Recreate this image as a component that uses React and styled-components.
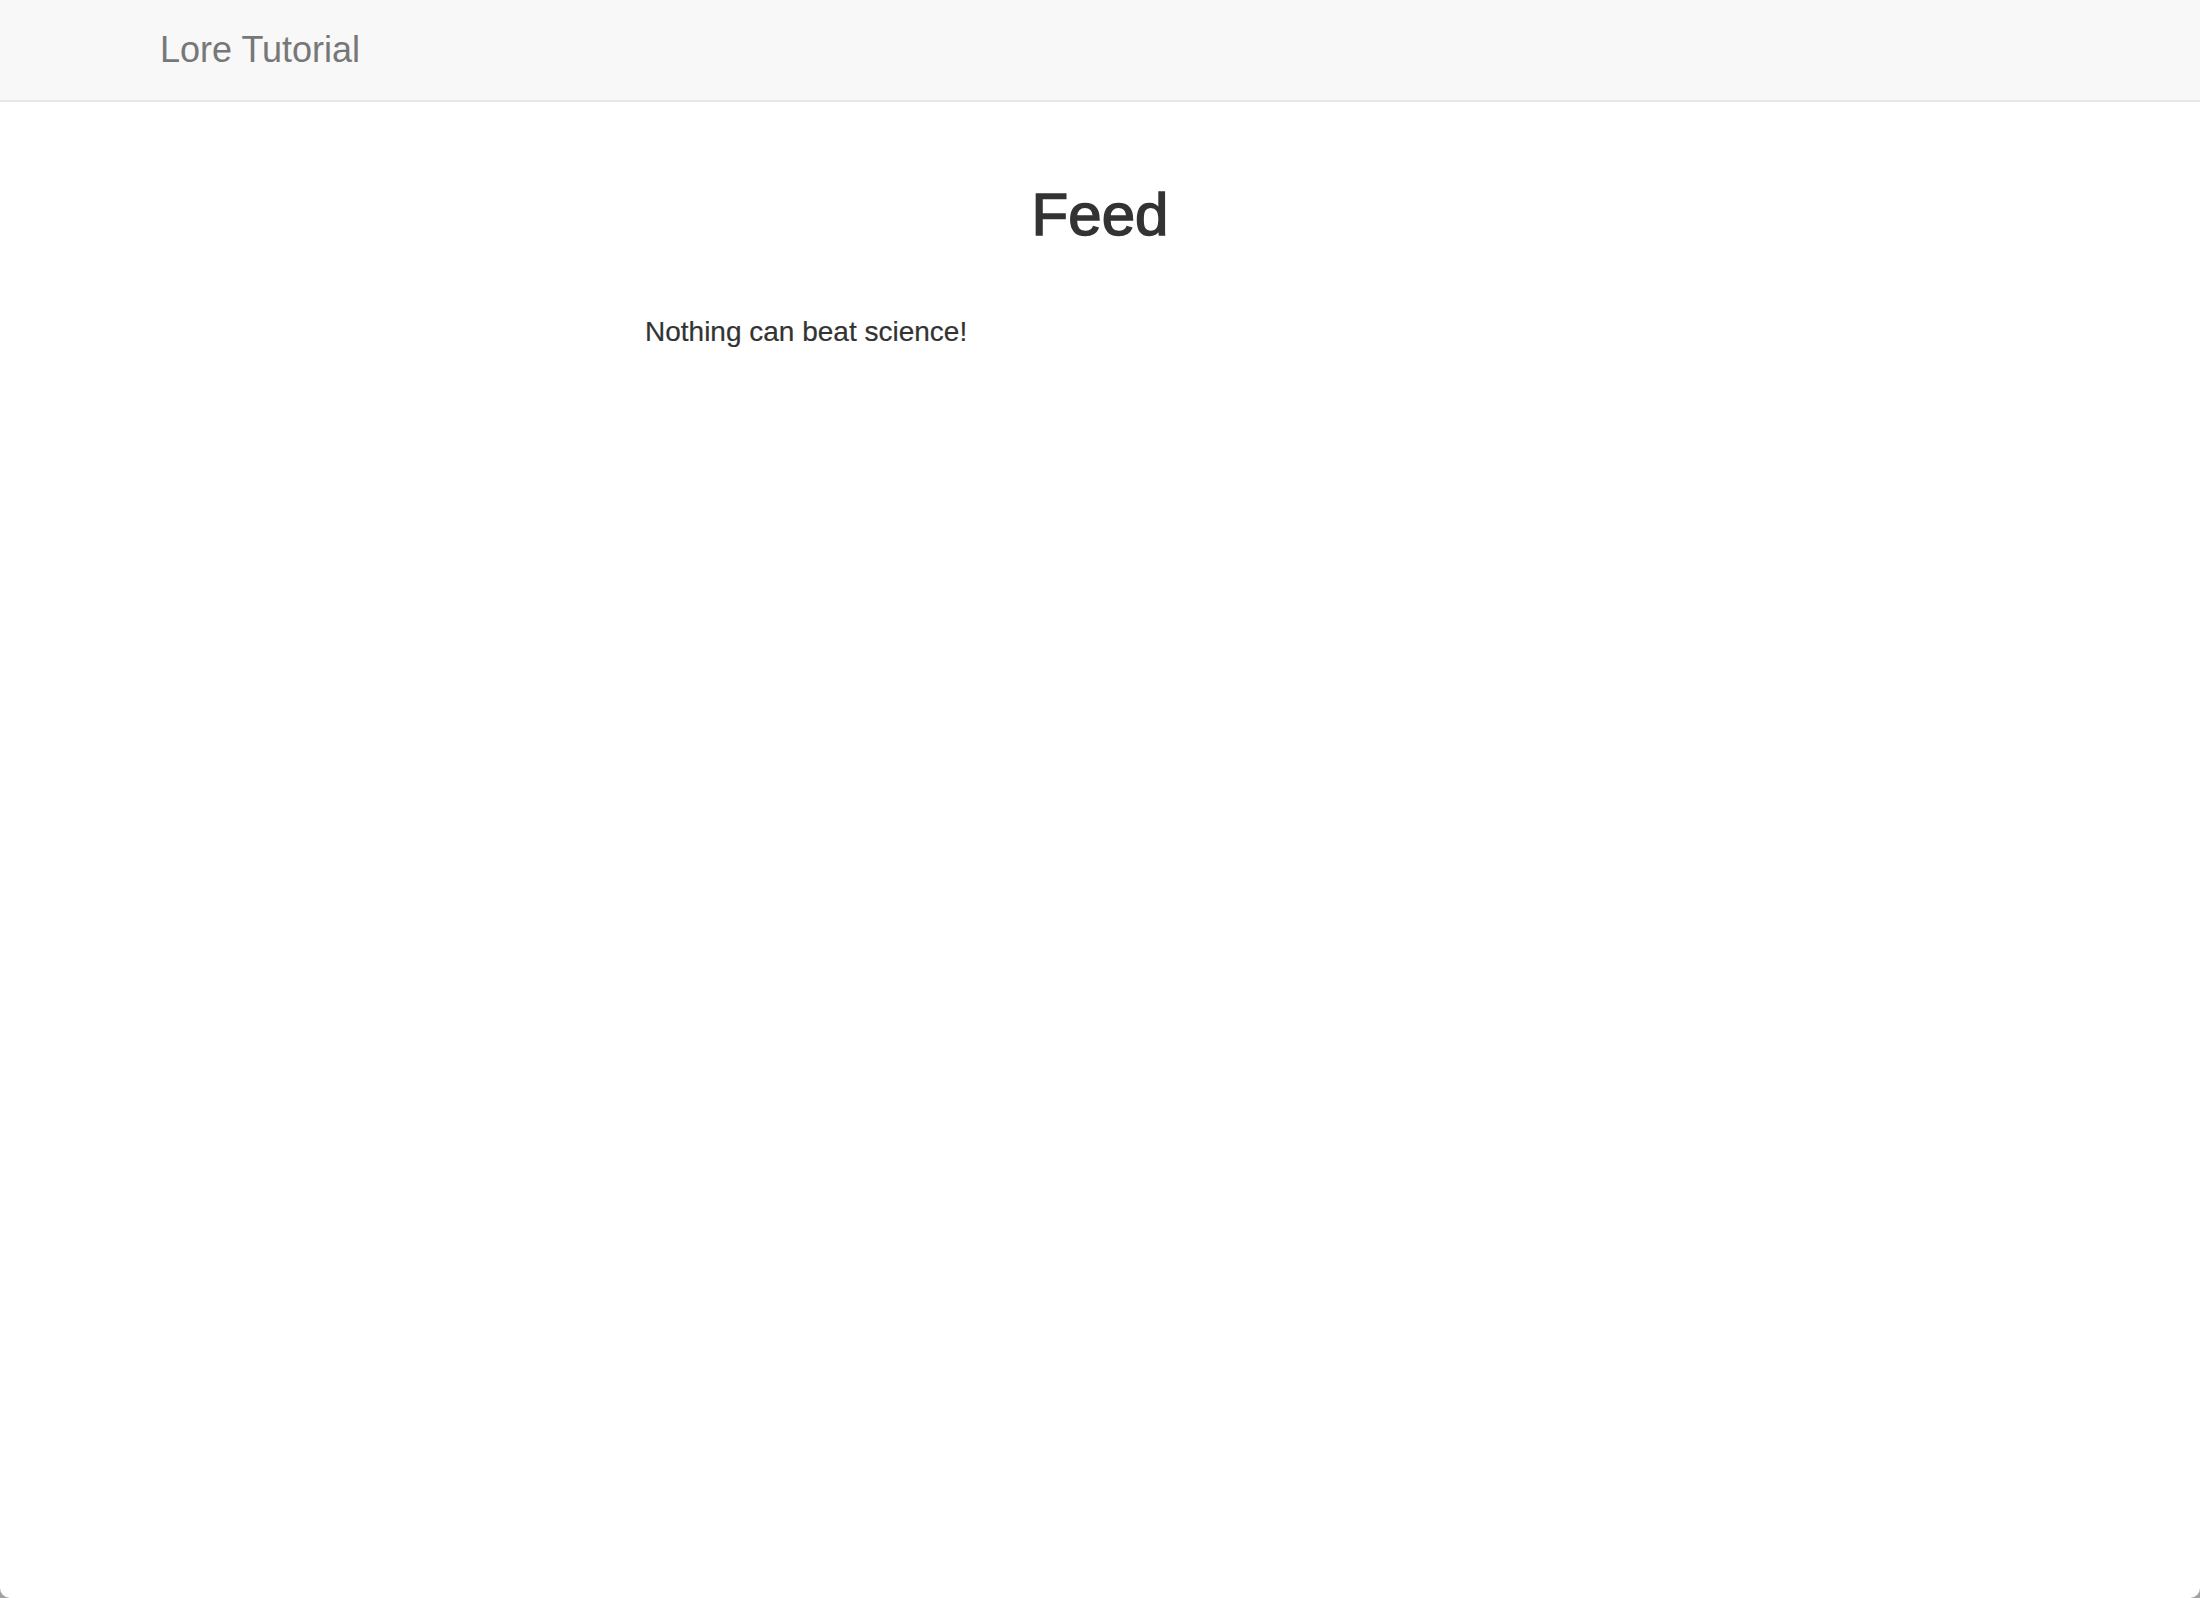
import React from "react";
import styled, { createGlobalStyle } from "styled-components";

const Global = createGlobalStyle`
  html, body { margin: 0; padding: 0; }
  body {
    background: #a0a0a0;
    font-family: "Liberation Sans", Arial, Helvetica, sans-serif;
    color: #333;
  }
`;

const Page = styled.div`
  height: 1598px;
  background: #fff;
  border-radius: 0 0 10px 10px;
  overflow: hidden;
`;

const Navbar = styled.nav`
  height: 100px;
  background: #f8f8f8;
  border-bottom: 2px solid #e7e7e7;
`;

const Container = styled.div`
  width: 1940px;
  margin: 0 auto;
  padding: 0 30px;
  box-sizing: border-box;
`;

const Brand = styled.a`
  display: block;
  width: fit-content;
  height: 100px;
  padding: 30px 30px;
  margin-left: -30px;
  box-sizing: border-box;
  font-size: 36px;
  line-height: 40px;
  color: #777;
  text-decoration: none;
`;

const Main = styled.div`
  width: 1940px;
  margin: 0 auto;
  padding: 40px 30px 0;
  box-sizing: border-box;
`;

const Title = styled.h2`
  margin: 40px 0 20px;
  font-size: 60px;
  line-height: 66px;
  font-weight: 400;
  -webkit-text-stroke: 1.5px #333;
  text-align: center;
  color: #333;
`;

const Column = styled.div`
  width: 970px;
  margin-left: 485px;
  margin-top: 64px;
`;

const Tweet = styled.p`
  margin: 0;
  font-size: 28px;
  line-height: 40px;
  color: #333;
  -webkit-text-stroke: 0.2px #333;
`;

export default function App() {
  return (
    <>
      <Global />
      <Page>
        <Navbar>
          <Container>
            <Brand href="#">Lore Tutorial</Brand>
          </Container>
        </Navbar>
        <Main>
          <Title>Feed</Title>
          <Column>
            <Tweet>Nothing can beat science!</Tweet>
          </Column>
        </Main>
      </Page>
    </>
  );
}
